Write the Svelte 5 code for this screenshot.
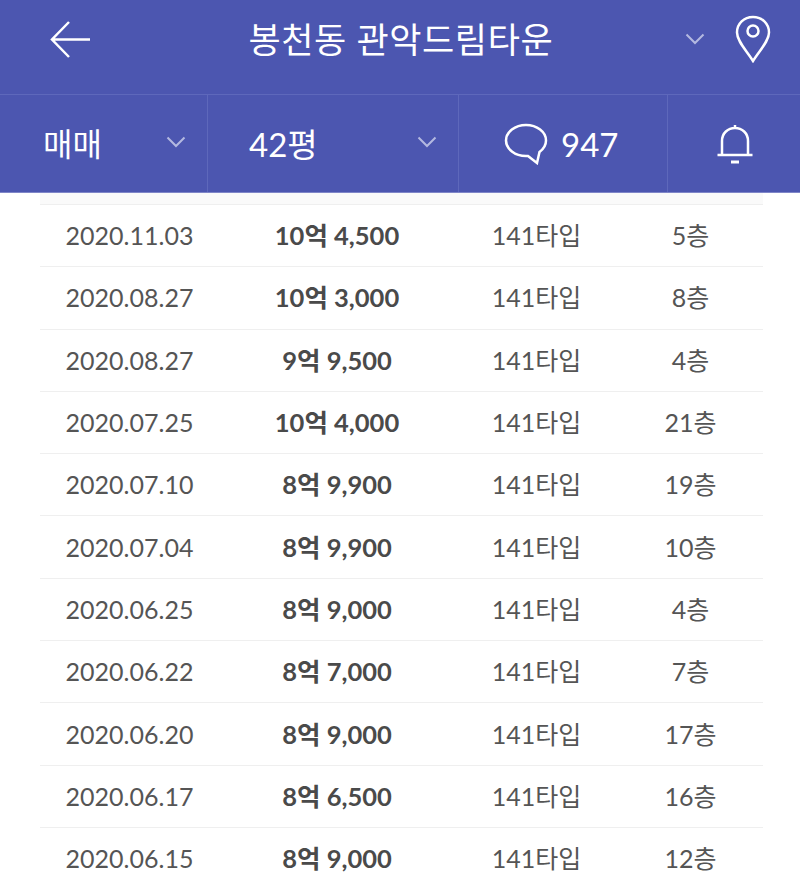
<script>
	const rows = [
		['2020.11.03', '10억 4,500', '141타입', '5층'],
		['2020.08.27', '10억 3,000', '141타입', '8층'],
		['2020.08.27', '9억 9,500', '141타입', '4층'],
		['2020.07.25', '10억 4,000', '141타입', '21층'],
		['2020.07.10', '8억 9,900', '141타입', '19층'],
		['2020.07.04', '8억 9,900', '141타입', '10층'],
		['2020.06.25', '8억 9,000', '141타입', '4층'],
		['2020.06.22', '8억 7,000', '141타입', '7층'],
		['2020.06.20', '8억 9,000', '141타입', '17층'],
		['2020.06.17', '8억 6,500', '141타입', '16층'],
		['2020.06.15', '8억 9,000', '141타입', '12층']
	];
</script>

<div class="page">
	<header>
		<div class="top">
			<svg class="back" width="42" height="38" viewBox="0 0 42 38">
				<path d="M41 19.500H3M20 2L3 19.500L20 37" />
			</svg>
			<h1>봉천동 관악드림타운</h1>
			<svg class="chev title-chev" width="20" height="12" viewBox="0 0 20 12"><path d="M1.500 1.500L10 10L18.500 1.500" /></svg>
			<svg class="pin" width="36" height="48" viewBox="0 0 36 48">
				<path d="M18 46C11 35 2 26 2 17.500C2 8.500 9 2 18 2C27 2 34 8.500 34 17.500C34 26 25 35 18 46Z" />
				<circle cx="18" cy="16" r="5.500" />
			</svg>
		</div>
		<div class="bar">
			<div class="cell deal">
				<span>매매</span>
				<svg class="chev" width="20" height="12" viewBox="0 0 20 12"><path d="M1.500 1.500L10 10L18.500 1.500" /></svg>
			</div>
			<div class="cell size">
				<span>42평</span>
				<svg class="chev" width="20" height="12" viewBox="0 0 20 12"><path d="M1.500 1.500L10 10L18.500 1.500" /></svg>
			</div>
			<div class="cell talk">
				<svg width="44" height="42" viewBox="0 0 44 42">
					<path d="M22 2C33 2 42 9 42 17.500C42 22 39.500 26 35.500 29L33 40L24 33C23 33 22.500 33 22 33C11 33 2 26 2 17.500C2 9 11 2 22 2Z" />
				</svg>
				<span>947</span>
			</div>
			<div class="cell bell">
				<svg width="38" height="40" viewBox="0 0 38 40">
					<path d="M19 1V4M6 30V17C6 9 12 4 19 4C26 4 32 9 32 17V30M1.500 31H36.500" />
					<path class="clap" d="M15 38H23" />
				</svg>
			</div>
		</div>
	</header>

	<div class="list">
		{#each rows as row}
			<div class="row">
				<span>{row[0]}</span>
				<strong>{row[1]}</strong>
				<span>{row[2]}</span>
				<span>{row[3]}</span>
			</div>
		{/each}
	</div>
</div>

<style>
	:global(body) {
		margin: 0;
		background: #fff;
	}

	.page {
		width: 800px;
		height: 885px;
		overflow: hidden;
		font-family: Lato, "Noto Sans CJK KR", sans-serif;
	}

	header {
		background: #4c56b0;
		color: #fff;
		height: 192px;
		border-bottom: 1px solid #7f86c8;
	}

	svg path,
	svg circle {
		fill: none;
		stroke: #fff;
		stroke-width: 2.500;
	}

	.top {
		height: 94px;
		border-bottom: 1px solid #5e68bb;
		display: flex;
		align-items: center;
	}

	.back {
		margin-left: 49px;
		margin-top: -16px;
	}

	h1 {
		margin: -17px 0 0 157.500px;
		font-size: 35px;
		font-weight: 400;
		line-height: 48px;
		letter-spacing: 0.600px;
		white-space: nowrap;
	}

	.chev path {
		stroke: #b4b9e0;
		stroke-width: 2;
	}

	.title-chev {
		margin: -16px 0 0 132px;
	}

	.pin {
		margin: -17px 0 0 29.500px;
	}

	.bar {
		height: 97px;
		display: flex;
	}

	.cell {
		display: flex;
		align-items: center;
		box-sizing: border-box;
		border-right: 1px solid #5e68bb;
		font-size: 33px;
		line-height: 48px;
	}

	.deal {
		width: 208px;
		padding-left: 43px;
		font-size: 32px;
	}

	.deal .chev {
		margin: -4px 0 0 64px;
	}

	.size {
		width: 251px;
		padding-left: 41px;
	}

	.size .chev {
		margin: -4px 0 0 99px;
	}

	.talk {
		width: 209px;
		padding-left: 45px;
	}

	.talk span {
		margin-left: 13px;
	}

	.bell {
		flex: 1;
		border-right: none;
		padding-left: 48px;
	}

	.clap {
		stroke-width: 3;
	}

	.list {
		margin: 0 37px 0 40px;
		padding-top: 11px;
		background: linear-gradient(#fafafa 0 11px, transparent 11px);
	}

	.row {
		height: 60.300px;
		padding-bottom: 1px;
		border-top: 1px solid #efefef;
		display: grid;
		grid-template-columns: 179px 236px 163px 145px;
		align-items: center;
		text-align: center;
		color: #555;
		font-size: 25px;
		line-height: 36px;
	}

	strong {
		color: #4a4a4a;
		font-weight: 700;
		font-size: 25.500px;
	}
</style>
